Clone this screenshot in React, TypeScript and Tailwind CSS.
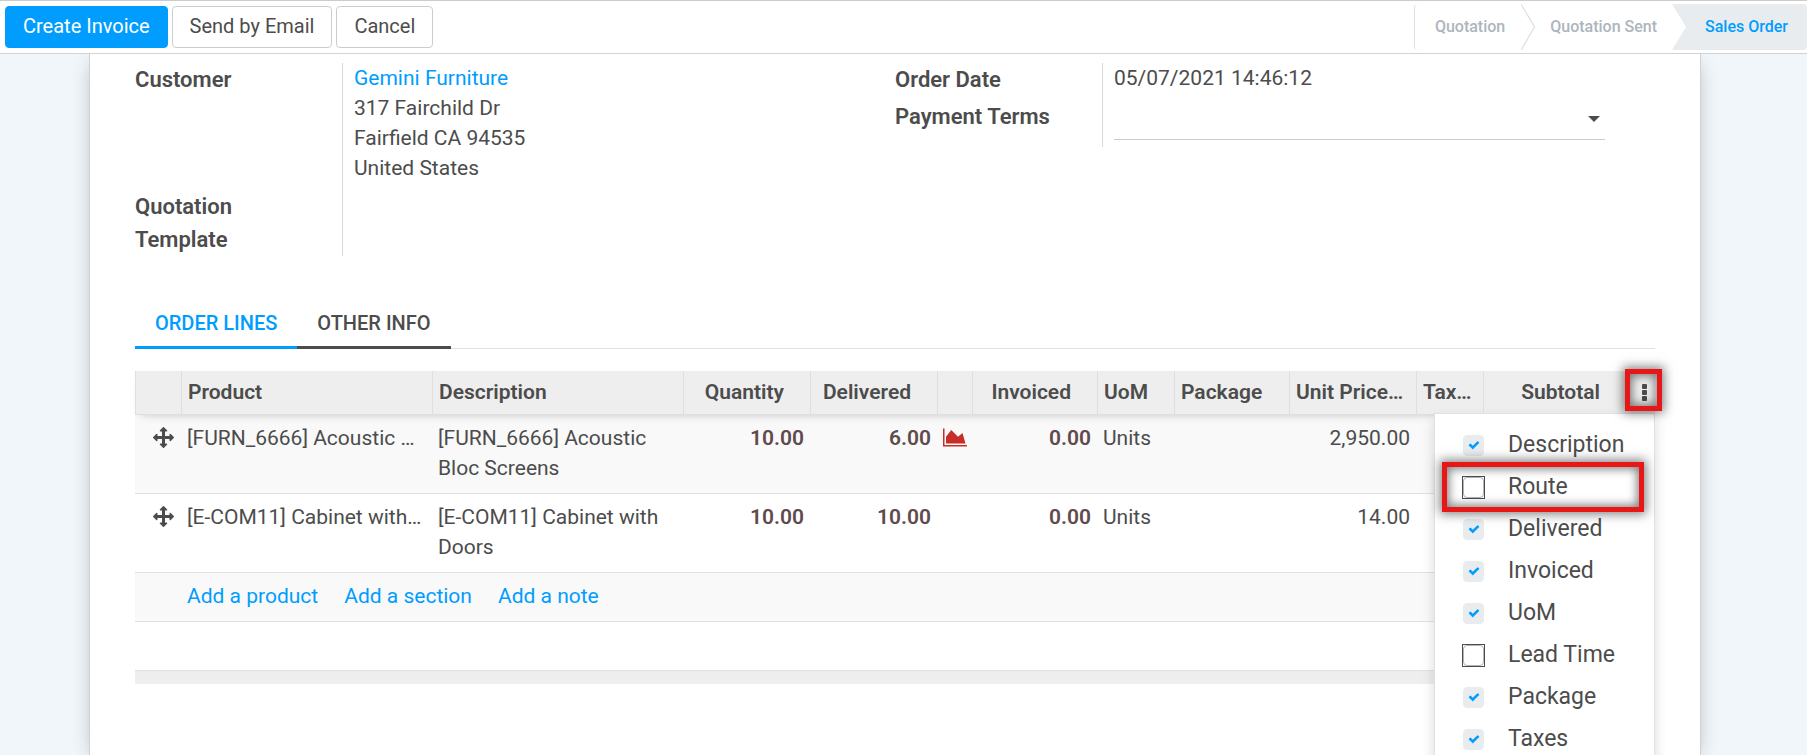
import { useState } from "react";

const address = ["317 Fairchild Dr", "Fairfield CA 94535", "United States"];

const lines = [
  {
    product: "[FURN_6666] Acoustic …",
    description: "[FURN_6666] Acoustic Bloc Screens",
    quantity: "10.00",
    delivered: "6.00",
    forecast: true,
    invoiced: "0.00",
    uom: "Units",
    price: "2,950.00",
  },
  {
    product: "[E-COM11] Cabinet with…",
    description: "[E-COM11] Cabinet with Doors",
    quantity: "10.00",
    delivered: "10.00",
    forecast: false,
    invoiced: "0.00",
    uom: "Units",
    price: "14.00",
  },
];

const optionalColumns = [
  { name: "Description", on: true },
  { name: "Route", on: false },
  { name: "Delivered", on: true },
  { name: "Invoiced", on: true },
  { name: "UoM", on: true },
  { name: "Lead Time", on: false },
  { name: "Package", on: true },
  { name: "Taxes", on: true },
];

const highlight =
  "pointer-events-none absolute z-20 border-5 border-[#e81717] shadow-[0_0_10px_2px_rgba(0,0,0,0.5),inset_0_0_10px_2px_rgba(0,0,0,0.5)]";

function AreaChartIcon() {
  return (
    <svg viewBox="0 0 2048 1792" className="mt-1 block h-[21px] w-6 fill-[#c52f28]" aria-label="Forecast">
      <path d="M2048 1536v128h-2048v-1536h128v1408h1920zm-384-1024l256 896h-1664v-576l448-576 576 576z" />
    </svg>
  );
}

function MoveIcon() {
  return (
    <svg viewBox="0 0 1792 1792" className="mt-1 ml-3 block size-[21px] fill-[#4c4c4c]" aria-hidden="true">
      <path d="M1792 896q0 26-19 45l-256 256q-19 19-45 19t-45-19-19-45v-128h-384v384h128q26 0 45 19t19 45-19 45l-256 256q-19 19-45 19t-45-19l-256-256q-19-19-19-45t19-45 45-19h128v-384h-384v128q0 26-19 45t-45 19-45-19l-256-256q-19-19-19-45t19-45l256-256q19-19 45-19t45 19 19 45v128h384v-384h-128q-26 0-45-19t-19-45 19-45l256-256q19-19 45-19t45 19l256 256q19 19 19 45t-19 45-45 19h-128v384h384v-128q0-26 19-45t45-19 45 19l256 256q19 19 19 45z" />
    </svg>
  );
}

function CheckIcon() {
  return (
    <svg viewBox="0 0 1792 1792" className="pointer-events-none absolute inset-0 m-auto size-3 fill-[#009dff]" aria-hidden="true">
      <path d="M1671 566q0 40-28 68l-724 724-136 136q-28 28-68 28t-68-28l-136-136-362-362q-28-28-28-68t28-68l136-136q28-28 68-28t68 28l294 295 656-657q28-28 68-28t68 28l136 136q28 28 28 68z" />
    </svg>
  );
}

function StatusBar() {
  return (
    <nav aria-label="Order status" className="flex h-[46px] items-stretch text-[16px] font-medium text-[#adb5bd]">
      <span className="flex items-center rounded-l border-l border-[#dee2e6] pr-4 pl-5">Quotation</span>
      <svg viewBox="0 0 14 46" className="h-full w-3.5" fill="none">
        <path d="M0 0l13.5 23L0 46" stroke="#dee2e6" strokeWidth="1.3" />
      </svg>
      <span className="flex items-center px-[15px]">Quotation Sent</span>
      <svg viewBox="0 0 14 46" className="h-full w-3.5">
        <path d="M0 0h14v46H0l14-23z" fill="#e9ecef" />
      </svg>
      <span className="flex items-center rounded-r bg-[#e9ecef] px-[19px] text-[#009dff]">Sales Order</span>
    </nav>
  );
}

function ColumnMenu() {
  const [columns, setColumns] = useState(optionalColumns);
  return (
    <div className="absolute top-[42px] right-0 z-10 w-[221px] border border-[#dee2e6] bg-white py-2.5 pr-5 pl-[27px] shadow-[0_6px_12px_rgba(0,0,0,0.15)]">
      {columns.map((column, i) => (
        <label key={column.name} className="relative flex h-[42px] items-center gap-[23px] text-[23px] font-normal">
          <span
            className={
              column.on
                ? "relative flex size-[23px] shrink-0 border border-transparent"
                : "relative flex size-[23px] shrink-0 border border-[#4c4c4c]"
            }
          >
            <input
              type="checkbox"
              checked={column.on}
              onChange={() => setColumns(columns.map((c, j) => (j === i ? { ...c, on: !c.on } : c)))}
              className="size-[21px] appearance-none rounded border border-[#adb5bd] checked:border-[#e9ecef] checked:bg-[#e9ecef]"
            />
            {column.on && <CheckIcon />}
          </span>
          {column.name}
          {column.name === "Route" && <span className={`${highlight} -inset-y-1 -right-2.5 -left-5`} />}
        </label>
      ))}
    </div>
  );
}

export default function App() {
  const th = "border-l border-[#dfdfe2] px-1.5 pb-0.5 text-left font-semibold whitespace-nowrap";
  const label = "text-[22px] leading-[33px] font-semibold";
  const button = "h-[42px] rounded border px-[17px] pb-0.5";
  return (
    <div className="flex h-screen flex-col overflow-hidden bg-[#f1f6fa] font-[Roboto,sans-serif] text-[21px] leading-[30px] text-[#4c4c4c]">
      <header className="relative z-10 flex h-[54px] shrink-0 items-center justify-between border-t border-b border-t-[#ccc] border-b-[#ced4da] bg-white pl-[5px]">
        <div className="flex gap-1 text-[20px]">
          <button className={`${button} border-[#009dff] bg-[#009dff] text-white`}>Create Invoice</button>
          <button className={`${button} border-[#ccc]`}>Send by Email</button>
          <button className={`${button} border-[#ccc]`}>Cancel</button>
        </div>
        <StatusBar />
      </header>

      <main className="mr-[106px] ml-[89px] grow border-x border-[#cfd3d8] bg-white px-[45px] shadow-[0_5px_20px_-5px_rgba(0,0,0,0.3)]">
        <div className="grid grid-cols-2 pt-[9px]">
          <dl className="grid grid-cols-[207px_1fr]">
            <dt className={label}>Customer</dt>
            <dd className="border-l border-[#d9d9d9] pl-[11px]">
              <a href="#customer" className="text-[#009dff]">Gemini Furniture</a>
              {address.map((line) => (
                <div key={line}>{line}</div>
              ))}
            </dd>
            <dt className={`${label} pt-[7px]`}>Quotation<br />Template</dt>
            <dd className="border-l border-[#d9d9d9] pl-[11px]" />
          </dl>
          <div className="grid grid-cols-[207px_1fr] content-start pr-[50px]">
            <span className={`${label} h-[37px]`}>Order Date</span>
            <span className="border-l border-[#d9d9d9] pl-[11px]">05/07/2021 14:46:12</span>
            <label htmlFor="terms" className={`${label} h-[47px]`}>Payment Terms</label>
            <span className="relative border-l border-[#d9d9d9] pl-[11px]">
              <select id="terms" className="h-10 w-full appearance-none border-b border-[#ccc] bg-transparent">
                <option />
              </select>
              <svg viewBox="0 0 12 6" className="pointer-events-none absolute top-4 right-[5px] h-1.5 w-3 fill-[#4c4c4c]">
                <path d="M0 0h12L6 6z" />
              </svg>
            </span>
          </div>
        </div>

        <div role="tablist" className="mt-11 flex h-[49px] items-stretch border-b border-[#dee2e6] text-[20px] font-medium">
          <button role="tab" aria-selected="true" className="-mb-px border-b-3 border-[#009dff] px-5 text-[#009dff] uppercase">Order Lines</button>
          <button role="tab" aria-selected="false" className="-mb-px border-b-3 border-[#4c4c4c] px-5 uppercase">Other Info</button>
        </div>

        <table className="mt-[22px] w-full table-fixed border-separate border-spacing-0">
          <colgroup>
            <col className="w-[46px]" />
            <col />
            <col />
            <col className="w-[127px]" />
            <col className="w-[127px]" />
            <col className="w-[35px]" />
            <col className="w-[125px]" />
            <col className="w-[77px]" />
            <col className="w-[115px]" />
            <col className="w-[127px]" />
            <col className="w-[67px]" />
            <col className="w-[143px]" />
            <col className="w-[29px]" />
          </colgroup>
          <thead className="relative z-10 shadow-[0_5px_10px_-6px_rgba(0,0,0,0.25)]">
            <tr className="h-11 bg-[#eee] [&>th]:border-b">
              <th className={th} />
              <th className={th}>Product</th>
              <th className={th}>Description</th>
              <th className={`${th} pr-[26px] text-right`}>Quantity</th>
              <th className={`${th} pr-[26px] text-right`}>Delivered</th>
              <th className={th} />
              <th className={`${th} pr-[26px] text-right`}>Invoiced</th>
              <th className={th}>UoM</th>
              <th className={th}>Package</th>
              <th className={th}>Unit Price…</th>
              <th className={th}>Tax…</th>
              <th className={`${th} pr-[26px] text-right`}>Subtotal</th>
              <th className="relative border-b border-[#dfdfe2] p-0">
                <button aria-label="Optional columns" className="flex h-10 w-full items-center justify-center pl-2">
                  <svg viewBox="0 0 5 17" className="h-[17px] w-[5px] fill-[#4c4c4c]">
                    <rect width="5" height="5" rx="1" />
                    <rect y="6" width="5" height="5" rx="1" />
                    <rect y="12" width="5" height="5" rx="1" />
                  </svg>
                </button>
                <span className={`${highlight} -top-0.5 -right-[7px] h-[42px] w-[37px]`} />
                <ColumnMenu />
              </th>
            </tr>
          </thead>
          <tbody>
            {lines.map((line) => (
              <tr
                key={line.product}
                className="align-top odd:bg-[#f9f9f9] [&>td]:border-b [&>td]:border-[#dee2e6] [&>td]:px-1.5 [&>td]:pt-2 [&>td]:pb-2.5"
              >
                <td>
                  <MoveIcon />
                </td>
                <td className="whitespace-nowrap">{line.product}</td>
                <td>{line.description}</td>
                <td className="text-right font-semibold text-[#5f4b4b]">{line.quantity}</td>
                <td className="text-right font-semibold text-[#5f4b4b]">{line.delivered}</td>
                <td>{line.forecast && <AreaChartIcon />}</td>
                <td className="text-right font-semibold text-[#5f4b4b]">{line.invoiced}</td>
                <td>{line.uom}</td>
                <td />
                <td className="text-right">{line.price}</td>
                <td />
                <td />
                <td />
              </tr>
            ))}
            <tr className="bg-[#f9f9f9] text-[#009dff] [&>td]:border-b [&>td]:border-[#dee2e6]">
              <td />
              <td colSpan={12} className="px-1.5 pt-2 pb-2.5">
                <div className="flex gap-[26px]">
                  <a href="#product">Add a product</a>
                  <a href="#section">Add a section</a>
                  <a href="#note">Add a note</a>
                </div>
              </td>
            </tr>
            <tr>
              <td colSpan={13} className="h-[49px] border-b border-[#dee2e6]" />
            </tr>
          </tbody>
          <tfoot>
            <tr>
              <td colSpan={13} className="h-[13px] bg-[#eee]" />
            </tr>
          </tfoot>
        </table>
      </main>
    </div>
  );
}
